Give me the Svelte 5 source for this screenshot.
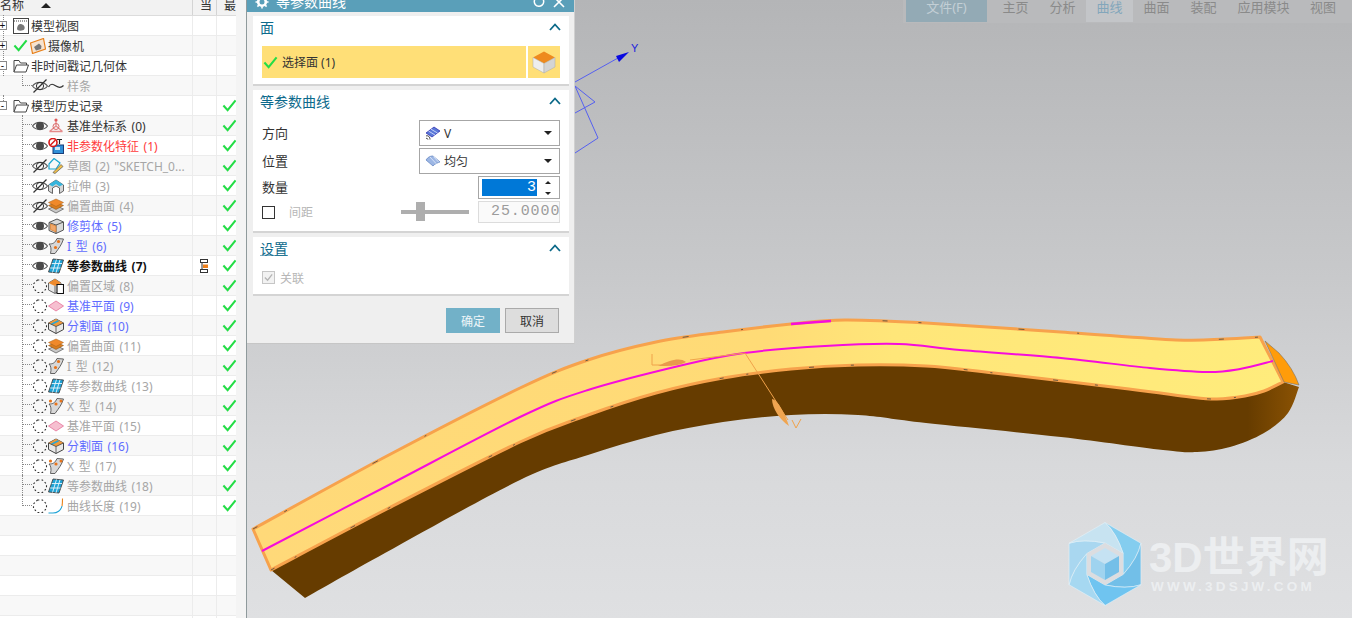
<script lang="ts">
  type Row = { label?: string; tone?: string; lvl?: number; vis?: string; icon?: string; check?: boolean; toggle?: string; stem?: string; cur?: boolean; camera?: boolean };

  const rows: Row[] = [
    { label: '模型视图', lvl: 0, icon: 'view', toggle: '+', stem: 'root' },
    { label: '摄像机', lvl: 0, icon: 'camera', toggle: '+', camera: true, stem: 'root' },
    { label: '非时间戳记几何体', lvl: 0, icon: 'folder', toggle: '-', stem: 'root' },
    { label: '样条', lvl: 1, vis: 'off', icon: 'spline', tone: 'gray', stem: 'last' },
    { label: '模型历史记录', lvl: 0, icon: 'folder', toggle: '-', check: true, stem: 'rootlast' },
    { label: '基准坐标系 (0)', lvl: 1, vis: 'on', icon: 'csys', check: true, tone: 'dark', stem: 'mid' },
    { label: '非参数化特征 (1)', lvl: 1, vis: 'on', icon: 'nonparam', check: true, tone: 'red', stem: 'mid' },
    { label: '草图 (2) "SKETCH_0...', lvl: 1, vis: 'off', icon: 'sketch', check: true, tone: 'gray', stem: 'mid' },
    { label: '拉伸 (3)', lvl: 1, vis: 'off', icon: 'extrude', check: true, tone: 'gray', stem: 'mid' },
    { label: '偏置曲面 (4)', lvl: 1, vis: 'off', icon: 'offset', check: true, tone: 'gray', stem: 'mid' },
    { label: '修剪体 (5)', lvl: 1, vis: 'on', icon: 'trim', check: true, tone: 'blue', stem: 'mid' },
    { label: 'I 型 (6)', lvl: 1, vis: 'on', icon: 'itype', check: true, tone: 'blue', stem: 'mid' },
    { label: '等参数曲线 (7)', lvl: 1, vis: 'on', icon: 'iso', check: true, tone: 'bold', cur: true, stem: 'mid' },
    { label: '偏置区域 (8)', lvl: 1, vis: 'sup', icon: 'region', check: true, tone: 'gray', stem: 'mid' },
    { label: '基准平面 (9)', lvl: 1, vis: 'sup', icon: 'plane', check: true, tone: 'blue', stem: 'mid' },
    { label: '分割面 (10)', lvl: 1, vis: 'sup', icon: 'split', check: true, tone: 'blue', stem: 'mid' },
    { label: '偏置曲面 (11)', lvl: 1, vis: 'sup', icon: 'offset', check: true, tone: 'gray', stem: 'mid' },
    { label: 'I 型 (12)', lvl: 1, vis: 'sup', icon: 'itype', check: true, tone: 'gray', stem: 'mid' },
    { label: '等参数曲线 (13)', lvl: 1, vis: 'sup', icon: 'iso', check: true, tone: 'gray', stem: 'mid' },
    { label: 'X 型 (14)', lvl: 1, vis: 'sup', icon: 'xtype', check: true, tone: 'gray', stem: 'mid' },
    { label: '基准平面 (15)', lvl: 1, vis: 'sup', icon: 'plane', check: true, tone: 'gray', stem: 'mid' },
    { label: '分割面 (16)', lvl: 1, vis: 'sup', icon: 'split', check: true, tone: 'blue', stem: 'mid' },
    { label: 'X 型 (17)', lvl: 1, vis: 'sup', icon: 'xtype', check: true, tone: 'gray', stem: 'mid' },
    { label: '等参数曲线 (18)', lvl: 1, vis: 'sup', icon: 'iso', check: true, tone: 'gray', stem: 'mid' },
    { label: '曲线长度 (19)', lvl: 1, vis: 'sup', icon: 'length', check: true, tone: 'gray', stem: 'last' },
    {}, {}, {}, {}, {}, {}
  ];

  const tabs = [
    { name: '主页', w: 47 },
    { name: '分析', w: 47 },
    { name: '曲线', w: 47, active: true },
    { name: '曲面', w: 47 },
    { name: '装配', w: 47 },
    { name: '应用模块', w: 73 },
    { name: '视图', w: 46 }
  ];

  // catmull-rom through the measured points, good enough for the body outline
  function smooth(pts: number[][], start = true) {
    let d = start ? `M${pts[0][0]} ${pts[0][1]}` : `L${pts[0][0]} ${pts[0][1]}`;
    for (let i = 0; i < pts.length - 1; i++) {
      const p0 = pts[i - 1] ?? pts[i];
      const p1 = pts[i];
      const p2 = pts[i + 1];
      const p3 = pts[i + 2] ?? p2;
      const c1 = [p1[0] + (p2[0] - p0[0]) / 6, p1[1] + (p2[1] - p0[1]) / 6];
      const c2 = [p2[0] - (p3[0] - p1[0]) / 6, p2[1] - (p3[1] - p1[1]) / 6];
      d += `C${c1[0].toFixed(1)} ${c1[1].toFixed(1)} ${c2[0].toFixed(1)} ${c2[1].toFixed(1)} ${p2[0]} ${p2[1]}`;
    }
    return d;
  }

  const upper = [[253,529],[385,457],[520,388],[588,360],[656,342],[723,332],[791,324],[845,320],[926,323],[1061,332],[1176,340],[1225,339],[1260,337]];
  const lower = [[271,570],[385,510],[520,442],[588,415],[656,393],[723,378],[791,369],[858,365],[926,366],[994,373],[1129,389],[1190,397],[1217,399],[1245,396],[1264,391],[1283,382]];
  const under = [[305,598],[385,553],[520,480],[588,455],[656,435],[723,422],[791,415],[858,415],[926,423],[1061,437],[1163,450],[1197,452],[1230,447],[1264,433],[1288,413],[1299,387]];
  const iso = [[262,551],[385,487],[520,417],[588,390],[683,365],[744,353],[825,346],[899,344],[960,350],[1061,358],[1150,368],[1207,372],[1240,369],[1273,361]];

  const topFace = smooth(upper) + 'L1283 382' + smooth([...lower].reverse(), false) + 'Z';
  const sideFace = smooth(lower) + 'L1299 387' + smooth([...under].reverse(), false) + 'Z';
  const isoPath = smooth(iso);
  const upperPath = smooth(upper);
  const lowerPath = smooth(lower);

  // hexagon logo of the watermark: six blades swept from the rim to the inner ring
  const cx = 1105;
  const cy = 564;
  const hex = (r: number) =>
    Array.from({ length: 6 }, (_, i) => {
      const a = ((i * 60 - 90) * Math.PI) / 180;
      return [cx + r * Math.cos(a), cy + r * Math.sin(a)];
    });
  const outer = hex(41.5);
  const inner = hex(21);
  const bladeColors = ['#84cdef', '#72bfe8', '#6fc4f0', '#a6d8f1', '#a9d7f0', '#c7e3f1'];
  const sweep = (a: number[], b: number[]) => {
    const mx = (a[0] + b[0]) / 2;
    const my = (a[1] + b[1]) / 2;
    return `${(cx + (mx - cx) * 1.22).toFixed(1)} ${(cy + (my - cy) * 1.22).toFixed(1)}`;
  };
  const blades = outer.map((p, i) => {
    const a = outer[(i + 1) % 6];
    const b = inner[(i + 2) % 6];
    const c = inner[(i + 1) % 6];
    return `M${p[0]} ${p[1]}L${a[0]} ${a[1]}Q${sweep(a, b)} ${b[0]} ${b[1]}L${c[0]} ${c[1]}Q${sweep(p, c)} ${p[0]} ${p[1]}Z`;
  });
</script>

{#snippet eye(kind)}
  <svg class="vis" viewBox="0 0 16 16" width="16" height="16">
    {#if kind === 'sup'}
      <path d="M5.5 2 H10.5 L14.5 6 V10.5 L10.5 14.5 H5.5 L1.5 10.5 V6 Z" fill="none" stroke="#333" stroke-width="1.1" stroke-dasharray="1.8 2.2"/>
    {:else}
      <path d="M0.5 8 C4 3.2 12 3.2 15.5 8 C12 12.8 4 12.8 0.5 8 Z" fill="none" stroke="#555" stroke-width="1.1"/>
      {#if kind === 'on'}
        <circle cx="8" cy="8" r="4" fill="#4a4a4a"/>
      {:else}
        <circle cx="8" cy="8" r="3.6" fill="none" stroke="#333" stroke-width="1"/>
        <path d="M1.5 14.5 L14.5 1.5" stroke="#333" stroke-width="1.2"/>
      {/if}
    {/if}
  </svg>
{/snippet}

{#snippet feature(kind)}
  <svg class="ico" viewBox="0 0 16 16" width="16" height="16">
    {#if kind === 'view'}
      <rect x="0.5" y="0.5" width="15" height="15" fill="#fff" stroke="#444"/>
      <path d="M1 3 H15" stroke="#444" stroke-dasharray="1 1"/>
      <path d="M4 11 C4 7 7 5 9 6.5 C12 7 12.5 11 10.5 12 C8 13 4.5 13 4 11 Z" fill="#777"/>
    {:else if kind === 'camera'}
      <path d="M0.5 5 L13.5 0.5 L15.5 11 L2.5 15.5 Z" fill="#f6e3cf" stroke="#e8801a" stroke-width="1.2"/>
      <path d="M4 9 L9 5.5 L11.5 8 L11 11 L6 12.5 Z" fill="#777"/>
    {:else if kind === 'folder'}
      <path d="M1 14 V2.5 H6 L7.5 5 H13.5 V7" fill="none" stroke="#444"/>
      <path d="M1 14 L3.5 7 H15.5 L13 14 Z" fill="#fff" stroke="#444"/>
    {:else if kind === 'spline'}
      <path d="M0.5 9 C3 5 5 6 8 8 C11 10 13 10 15.5 7.5" fill="none" stroke="#333" stroke-width="1.2"/>
    {:else if kind === 'csys'}
      <path d="M8 2 V8 L1.5 13.5 M8 8 L14.5 13.5 M1.5 13.5 H14.5" fill="none" stroke="#e58a8a" stroke-width="1.3"/>
      <circle cx="8" cy="8.5" r="3" fill="none" stroke="#d96a6a"/>
      <circle cx="8" cy="2" r="1.6" fill="#e05a5a"/>
    {:else if kind === 'nonparam'}
      <rect x="5" y="7" width="10.5" height="8.5" fill="#2f8fd8" stroke="#1a3f7a"/>
      <rect x="7" y="9" width="5" height="3" fill="#cde6f7"/>
      <circle cx="5" cy="4.5" r="4" fill="#fff" stroke="#d81818" stroke-width="1.6"/>
      <path d="M2.5 7 L7.5 2" stroke="#d81818" stroke-width="1.4"/>
      <path d="M9 1.5 H14 M11.5 1.5 V6" stroke="#222" stroke-width="1.2"/>
    {:else if kind === 'sketch'}
      <path d="M1 6 L6 0.5 L12 5 L8 11 H1 Z" fill="none" stroke="#1aa6cf" stroke-width="1.2"/>
      <path d="M5 14.5 L13 6.5 L15 8.5 L7 15.5 Z" fill="#f2c14a" stroke="#555" stroke-width="0.7"/>
    {:else if kind === 'extrude'}
      <path d="M0.5 7 L8 2 L15.5 7 V13 L11.5 15.5 V10 L8 8 L4.5 10 V15.5 L0.5 13 Z" fill="#d6d6d6" stroke="#444" stroke-width="0.8"/>
      <path d="M1 6.5 L8 2 L15 6.5 L11.5 8.5 L8 6 L4.5 8.5 Z" fill="#35b5dd"/>
    {:else if kind === 'offset'}
      <path d="M0.5 11 L8 7.5 L15.5 11 L8 15 Z" fill="#c9c9c9" stroke="#555" stroke-width="0.7"/>
      <path d="M0.5 7.5 L8 4 L15.5 7.5 L8 11.5 Z" fill="#d97d1e" stroke="#8a4d10" stroke-width="0.5"/>
      <path d="M0.5 4.5 L8 1 L15.5 4.5 L8 8.5 Z" fill="#f0892a" stroke="#a85f14" stroke-width="0.5"/>
    {:else if kind === 'trim'}
      <path d="M1 4.5 L9 1 L15.5 4 V12 L8 15.5 L1 12.5 Z" fill="#d8d8d8" stroke="#555"/>
      <path d="M1 4.5 L8 7 L15.5 4 M8 7 V15.5" fill="none" stroke="#555"/>
      <path d="M2.5 6 L8 8 V14 L2.5 11.5 Z" fill="#f0a76a" stroke="#d97a24" stroke-width="0.7"/>
    {:else if kind === 'itype' || kind === 'xtype'}
      <path d="M1 6 C5 6 7 5 9 0.5 L15.5 1 C13.5 7 11 10 7 15.5 L2.5 15.5 C3.5 11 3 8 1 6 Z" fill="#d8d8d8" stroke="#555" stroke-width="0.9"/>
      {#if kind === 'itype'}
        <circle cx="10.5" cy="3.5" r="1.6" fill="#e8741a"/>
        <circle cx="7.5" cy="9.5" r="1.6" fill="#e8741a"/>
      {:else}
        <circle cx="2.5" cy="3" r="1.6" fill="#e8741a"/>
        <circle cx="8" cy="6" r="1.6" fill="#e8741a"/>
        <circle cx="13" cy="3" r="1.5" fill="#e8741a"/>
      {/if}
    {:else if kind === 'iso'}
      <path d="M5 1 L15.5 2 L11 15 L0.5 14 Z" fill="#1fa3d6" stroke="#444" stroke-width="0.9"/>
      <path d="M8.5 1.5 L4.5 14.5 M12 1.8 L8 14.8 M3.7 5.5 H14 M2.2 10 H12.5" stroke="#e8f5fb" stroke-width="0.9"/>
    {:else if kind === 'region'}
      <path d="M0.5 5 L7 1 L13 5 V12 L7 15.5 L0.5 12 Z" fill="#e6e6e6" stroke="#444" stroke-width="0.8"/>
      <path d="M0.5 5 L7 1 L13 5 L7 8 Z" fill="#ee8a2c"/>
      <path d="M9 6.5 H15.5 V15.5 H9 Z" fill="#fff" stroke="#111" stroke-width="1.1"/>
      <path d="M7 8 V15" stroke="#444" stroke-width="0.8"/>
    {:else if kind === 'plane'}
      <path d="M0.5 8 L8 3 L15.5 8 L8 13 Z" fill="#f6bfd0" stroke="#e87ea0" stroke-width="0.9"/>
    {:else if kind === 'split'}
      <path d="M0.5 5 L8 1 L15.5 5 V11.5 L8 15.5 L0.5 11.5 Z" fill="#e8e8e8" stroke="#444"/>
      <path d="M0.5 5 L8 1 L15.5 5 L8 8.5 Z" fill="#f09a3a"/>
      <path d="M3.5 6.2 L10.5 2.8" stroke="#2aa6d6" stroke-width="1.6"/>
      <path d="M0.5 5 L8 8.5 L15.5 5 M8 8.5 V15.5" fill="none" stroke="#444" stroke-width="0.8"/>
    {:else if kind === 'length'}
      <path d="M0.5 15 H5 C9 15 13 12.5 14 8" fill="none" stroke="#1fa3d6" stroke-width="1.1"/>
      <path d="M14 8 C14.5 6 14.5 3 14.5 0.5" fill="none" stroke="#e8841e" stroke-width="1.1"/>
    {/if}
  </svg>
{/snippet}

{#snippet tick(size = 16)}
  <svg viewBox="0 0 16 16" width={size} height={size}>
    <path d="M1.5 8 L6 13 L14.5 2.5" fill="none" stroke="#23dd46" stroke-width="2.2"/>
  </svg>
{/snippet}

<div class="page">
  <aside class="nav">
    <div class="tree">
      <div class="head">
        <div class="c-name">
          <span class="title">名称</span>
          <span class="sort"></span>
        </div>
        <div class="c-cur"><span class="title">当</span></div>
        <div class="c-new"><span class="title">最</span></div>
      </div>
      {#each rows as r, i}
        <div class="row" class:alt={i % 2 === 1}>
          <div class="c-name" class:sub={r.lvl === 1}>
            {#if r.stem}<span class="stem {r.stem}"></span>{/if}
            {#if r.toggle}<span class="toggle">{r.toggle}</span>{/if}
            {#if r.camera}<span class="cam">{@render tick(15)}</span>{/if}
            {#if r.vis}{@render eye(r.vis)}{/if}
            {#if r.icon}{@render feature(r.icon)}{/if}
            {#if r.label}<span class="label {r.tone ?? ''}" class:top={r.lvl === 0}>{r.label}</span>{/if}
          </div>
          <div class="c-cur">
            {#if r.cur}
              <svg viewBox="0 0 8 14" width="8" height="14">
                <path d="M2 3 V12" stroke="#333"/>
                <rect x="0.5" y="0.5" width="7" height="3" fill="#fff" stroke="#333"/>
                <rect x="0.5" y="10.5" width="7" height="3" fill="#fff" stroke="#333"/>
                <rect x="3" y="5.5" width="5" height="3.5" fill="#ee7f1a"/>
              </svg>
            {/if}
          </div>
          <div class="c-new">
            {#if r.check}<span class="ok">{@render tick(15)}</span>{/if}
          </div>
        </div>
      {/each}
    </div>
  </aside>

  <main class="canvas">
    <svg class="scene" viewBox="247 0 1105 618" width="1105" height="618">
      <defs>
        <linearGradient id="face" gradientUnits="userSpaceOnUse" x1="252" x2="1285" y1="0" y2="0">
          <stop offset="0" stop-color="#ffd979"/>
          <stop offset="0.5" stop-color="#ffdb76"/>
          <stop offset="0.62" stop-color="#ffe679"/>
          <stop offset="1" stop-color="#ffec7c"/>
        </linearGradient>
        <linearGradient id="side" gradientUnits="userSpaceOnUse" x1="252" x2="1300" y1="0" y2="0">
          <stop offset="0" stop-color="#663c00"/>
          <stop offset="0.95" stop-color="#663c00"/>
          <stop offset="1" stop-color="#8c5303"/>
        </linearGradient>
      </defs>

      <!-- wcs triad -->
      <g fill="none" stroke="#5560f0" stroke-width="1">
        <path d="M575 82 L618 58"/>
        <path d="M575 86 L595 102 L575 113"/>
        <path d="M575 86 L598 138 L575 153"/>
      </g>
      <path d="M629 52 L616 56 L619 62 Z" fill="#0808e0"/>
      <text x="631" y="52" class="axis">Y</text>

      <path d={sideFace} fill="url(#side)"/>
      <path d={topFace} fill="url(#face)" stroke="#f7a24c" stroke-width="3" stroke-linejoin="round"/>
      <path d="M1265 341 L1279 353 Q1293 368 1299 385 L1284 382 Z" fill="#ff9c0a" stroke="#666" stroke-width="0.5"/>
      <!-- z-fight specks along the edges -->
      <path d={upperPath} fill="none" stroke="#6a5a40" stroke-width="1" stroke-dasharray="5 31 3 97 6 53 2 140"/>
      <path d={lowerPath} fill="none" stroke="#6a5a40" stroke-width="1" stroke-dasharray="4 23 2 61 5 37 3 110"/>
      <path d={isoPath} fill="none" stroke="#f60cdc" stroke-width="2"/>
      <path d="M791 324 L831 321" stroke="#f60cdc" stroke-width="2.4"/>

      <!-- direction handles on the surface -->
      <g fill="none" stroke="#f0a24a" stroke-width="1">
        <path d="M745 353 L690 360 M652 354 V365 H672"/>
        <path d="M745 353 L788 420"/>
        <path d="M792 420 L796 428 L801 419"/>
      </g>
      <path d="M658 366 C670 360 680 357 686 362 C680 366 668 366 658 366 Z" fill="#e89a4c"/>
      <path d="M772 399 C778 400 784 412 789 426 C780 420 772 408 772 399 Z" fill="#f0a550"/>

      <!-- watermark -->
      <g>
        {#each blades as b, i}
          <path d={b} fill={bladeColors[i]} stroke="#e4f2f9" stroke-width="0.6"/>
        {/each}
        <polygon points="1105,543 1123,553.5 1123,574.5 1105,585 1087,574.5 1087,553.5" fill="#dcdde0"/>
        <polygon points="1105,548 1119,556 1105,564 1091,556" fill="#c5e2f3"/>
        <polygon points="1091,556 1105,564 1105,580 1091,572" fill="#9fd3ef"/>
        <polygon points="1119,556 1105,564 1105,580 1119,572" fill="#74bfe8"/>
        <text x="1149" y="572" class="wm-big">3D世界网</text>
        <text x="1151" y="591" class="wm-small">WWW.3DSJW.COM</text>
      </g>
    </svg>

    <div class="ribbon">
      <div class="file">文件(F)</div>
      {#each tabs as t}
        <div class="tab" class:active={t.active} style="width:{t.w}px">{t.name}</div>
      {/each}
    </div>

    <section class="dialog">
      <header class="bar">
        <div class="bar-in">
          <svg viewBox="0 0 14 14" width="14" height="14">
            <circle cx="7" cy="7" r="3.8" fill="none" stroke="#fff" stroke-width="2.6"/>
            <path d="M7 0.5 V13.5 M0.5 7 H13.5 M2.4 2.4 L11.6 11.6 M11.6 2.4 L2.4 11.6" stroke="#fff" stroke-width="1.6" stroke-dasharray="2 9"/>
          </svg>
          <span class="bar-title">等参数曲线</span>
          <span class="grow"></span>
          <svg viewBox="0 0 12 12" width="12" height="12">
            <path d="M9.5 2.5 A4.7 4.7 0 1 1 3 2" fill="none" stroke="#fff" stroke-width="1.5"/>
          </svg>
          <svg class="close" viewBox="0 0 12 12" width="12" height="12">
            <path d="M1 1 L11 11 M11 1 L1 11" stroke="#fff" stroke-width="1.6"/>
          </svg>
        </div>
      </header>

      <div class="group g1">
        <div class="g-head">
          <span>面</span>
          <svg viewBox="0 0 12 8" width="12" height="8"><path d="M1 7 L6 1.5 L11 7" fill="none" stroke="#0a6888" stroke-width="1.8"/></svg>
        </div>
        <div class="picker">
          <div class="pick-main">
            {@render tick(15)}
            <span>选择面 (1)</span>
          </div>
          <div class="pick-btn">
            <svg viewBox="0 0 24 24" width="24" height="24">
              <path d="M12 1.5 L23 7.5 L12 13.5 L1 7.5 Z" fill="#ee8a1e"/>
              <path d="M1 7.5 L12 13.5 V23 L1 17 Z" fill="#eeeeee" stroke="#aaa" stroke-width="0.5"/>
              <path d="M23 7.5 L12 13.5 V23 L23 17 Z" fill="#d4d4d4" stroke="#aaa" stroke-width="0.5"/>
            </svg>
          </div>
        </div>
      </div>

      <div class="group g2">
        <div class="g-head">
          <span>等参数曲线</span>
          <svg viewBox="0 0 12 8" width="12" height="8"><path d="M1 7 L6 1.5 L11 7" fill="none" stroke="#0a6888" stroke-width="1.8"/></svg>
        </div>
        <div class="field">
          <label for="dir">方向</label>
          <div class="select" id="dir">
            <svg viewBox="0 0 16 14" width="16" height="14">
              <path d="M1 7 L9 1 L15 5 L7 11 Z" fill="#5a78d8" stroke="#2222aa" stroke-width="0.7"/>
              <path d="M3.5 5 L10 9 M6 3.2 L12.5 7" stroke="#dfe6ff" stroke-width="0.8"/>
              <path d="M1 10 C3 9 5 11 5 13.5 M1 12.5 C2 12 3 13 3 13.5" fill="none" stroke="#222" stroke-width="0.9"/>
            </svg>
            <span>V</span><i></i>
          </div>
        </div>
        <div class="field">
          <label for="pos">位置</label>
          <div class="select" id="pos">
            <svg viewBox="0 0 16 14" width="16" height="14">
              <path d="M1 6 C3 3 5 2 8 2 L15 8 C12 9 9.5 10 8 12 Z" fill="#9cb6e4" stroke="#6a8ac4" stroke-width="0.8"/>
              <path d="M5 3 L11.5 10 M8.5 2.5 L14 8.5" stroke="#e4ecfa" stroke-width="0.8"/>
            </svg>
            <span>均匀</span><i></i>
          </div>
        </div>
        <div class="field num">
          <label for="cnt">数量</label>
          <div class="spin" id="cnt">
            <span class="sel">3</span>
            <span class="arrows"><b></b><b></b></span>
          </div>
        </div>
        <div class="field pitch">
          <span class="box"></span>
          <span class="muted">间距</span>
          <span class="grow"></span>
          <span class="slider"><span class="thumb"></span></span>
          <span class="val">25.00000</span>
        </div>
      </div>

      <div class="group g3">
        <div class="g-head">
          <span class="u">设置</span>
          <svg viewBox="0 0 12 8" width="12" height="8"><path d="M1 7 L6 1.5 L11 7" fill="none" stroke="#0a6888" stroke-width="1.8"/></svg>
        </div>
        <div class="assoc">
          <span class="box on">
            <svg viewBox="0 0 12 12" width="11" height="11"><path d="M2 6 L5 9 L10 2.5" fill="none" stroke="#b4b4b4" stroke-width="1.4"/></svg>
          </span>
          <span class="muted">关联</span>
        </div>
      </div>

      <footer class="actions">
        <button class="ok-btn">确定</button>
        <button class="no-btn">取消</button>
      </footer>
    </section>
  </main>
</div>

<style>
  :global(body) {
    margin: 0;
    overflow: hidden;
  }

  .page {
    display: flex;
    width: 1352px;
    height: 618px;
    overflow: hidden;
    font-family: "Noto Sans", "Noto Sans CJK SC", sans-serif;
    font-size: 12px;
    color: #333;
  }

  /* navigator */
  .nav {
    width: 247px;
    flex: none;
    box-sizing: border-box;
    background: #f4f4f4;
    border-right: 1px solid #8f9a9c;
    overflow: hidden;
  }

  .tree {
    width: 236px;
    background: #fff;
  }

  .head,
  .row {
    display: grid;
    grid-template-columns: 193px 24px 19px;
  }

  .head {
    height: 16px;
    background: #f2f2f2;
    border-bottom: 1px solid #dcdcdc;
    box-sizing: border-box;
    overflow: hidden;
  }

  .head > div {
    display: flex;
    align-items: flex-start;
    overflow: hidden;
    border-right: 1px solid #d4d4d4;
    box-sizing: border-box;
  }

  .head .c-cur {
    padding-left: 7px;
  }

  .head .c-new {
    padding-left: 7px;
    border-right: 0;
  }

  .title {
    font-size: 12px;
    line-height: 12px;
    white-space: nowrap;
  }

  .sort {
    width: 0;
    height: 0;
    margin: 3px 0 0 17px;
    border: 5px solid transparent;
    border-top: 0;
    border-bottom: 5px solid #222;
  }

  .row {
    height: 20px;
    box-sizing: border-box;
    border-bottom: 1px solid #ececec;
    background: #fff;
  }

  .row.alt {
    background: #f8f8f8;
  }

  .row > div {
    position: relative;
    display: flex;
    align-items: center;
    height: 19px;
    border-right: 1px solid #ececec;
    box-sizing: border-box;
  }

  .row .c-new {
    border-right: 0;
    overflow: hidden;
  }

  .row .c-name {
    padding-left: 13px;
  }

  .row .c-name.sub {
    padding-left: 32px;
  }

  .row .c-cur {
    justify-content: center;
    padding-right: 1px;
  }

  .ok {
    display: flex;
    margin-left: 5px;
  }

  .cam {
    display: flex;
    margin-right: 2px;
  }

  .toggle {
    position: absolute;
    left: -2px;
    top: 5px;
    width: 7px;
    height: 7px;
    border: 1px solid #888;
    background: #fff;
    font: 10px/7px "Liberation Sans", sans-serif;
    text-align: center;
    color: #111;
    z-index: 1;
  }

  .stem {
    position: absolute;
    border-left: 1px dotted #888;
  }

  .stem.root {
    left: 3px;
    top: -1px;
    height: 21px;
  }

  .stem.rootlast {
    left: 3px;
    top: -1px;
    height: 10px;
  }

  .stem.mid,
  .stem.last {
    left: 22px;
    width: 9px;
    top: -1px;
    border-bottom: 1px dotted #888;
  }

  .stem.mid {
    height: 20px;
    border-bottom: 0;
    background: repeating-linear-gradient(90deg, #888 0 1px, transparent 1px 2px) 0 9px / 100% 1px no-repeat;
  }

  .stem.last {
    height: 10px;
  }

  .vis,
  .ico {
    flex: none;
  }

  .label {
    margin-left: 3px;
    white-space: nowrap;
    word-spacing: 1.5px;
    color: #333;
  }

  .label.top {
    margin-left: 2px;
  }

  .label.gray {
    color: #a6a6a6;
  }

  .label.blue {
    color: #5f6cff;
  }

  .label.red {
    color: #ff3c3c;
  }

  .label.bold {
    color: #111;
    font-weight: 700;
  }

  /* graphics area */
  .canvas {
    position: relative;
    flex: 1;
    min-width: 0;
    background: linear-gradient(180deg, #b4b5b7 0%, #c8c9cb 45%, #d8d9db 75%, #dfe0e2 100%);
    overflow: hidden;
  }

  .scene {
    position: absolute;
    left: 0;
    top: 0;
    display: block;
  }

  .axis {
    font: 11px "Liberation Sans", sans-serif;
    fill: #2222dd;
  }

  .wm-big {
    font: 700 42px "Liberation Sans", "Noto Sans CJK SC", sans-serif;
    fill: #eceef0;
  }

  .wm-small {
    font: 700 13.5px "Liberation Sans", sans-serif;
    letter-spacing: 3.2px;
    fill: #eceef0;
  }

  .ribbon {
    position: absolute;
    right: 0;
    top: 0;
    width: 449px;
    height: 23px;
    padding-left: 3px;
    box-sizing: border-box;
    display: flex;
    background: #b9babc;
    color: #8a8a8a;
    font-size: 13px;
  }

  .file {
    width: 81px;
    height: 22px;
    line-height: 15px;
    text-align: center;
    background: #93aab5;
    color: #c3cfd5;
    margin-right: 5px;
  }

  .tab {
    height: 22px;
    line-height: 15px;
    text-align: center;
    flex: none;
  }

  .tab.active {
    background: #c3c5c8;
    color: #82a6bb;
  }

  /* dialog */
  .dialog {
    position: absolute;
    left: 0;
    top: 0;
    width: 328px;
    height: 344px;
    box-sizing: border-box;
    background: #efefef;
    padding: 0 6px;
    display: flex;
    flex-direction: column;
    border-right: 1px solid #d0d0d0;
    border-bottom: 1px solid #c6c6c6;
  }

  .bar {
    height: 12px;
    margin: 0 -6px 4px;
    background: #5a9fb9;
    overflow: hidden;
    flex: none;
  }

  .bar-in {
    display: flex;
    align-items: center;
    gap: 7px;
    height: 14px;
    margin-top: -5px;
    padding: 0 9px 0 8px;
    color: #fff;
    font-size: 14px;
    line-height: 14px;
  }

  .grow {
    flex: 1;
  }

  .close {
    margin-left: 1px;
  }

  .group {
    background: #fff;
    border-bottom: 2px solid #d4d4d4;
    box-sizing: border-box;
    padding: 0 9px;
    margin-bottom: 4px;
    flex: none;
    width: 316px;
  }

  .g1 {
    height: 70px;
  }

  .g2 {
    height: 143px;
  }

  .g3 {
    height: 59px;
  }

  .g-head {
    display: flex;
    justify-content: space-between;
    align-items: center;
    height: 26px;
    box-sizing: border-box;
    padding-bottom: 4px;
    margin: 0 -1px 4px -2px;
    color: #0d6a8c;
    font-size: 14px;
  }

  .g3 .g-head {
    margin-bottom: 0;
  }

  .g-head .u {
    text-decoration: underline;
    text-decoration-color: #7fb0c4;
    text-underline-offset: 1px;
  }

  .picker {
    display: flex;
    gap: 2px;
    height: 32px;
  }

  .pick-main {
    flex: 1;
    display: flex;
    align-items: center;
    gap: 4px;
    background: #ffdf77;
    padding-left: 1px;
    color: #333;
  }

  .pick-btn {
    width: 32px;
    display: flex;
    align-items: center;
    justify-content: center;
    background: #ffdf77;
  }

  .field {
    display: flex;
    align-items: center;
    justify-content: space-between;
    height: 26px;
    margin-bottom: 2px;
    color: #333;
  }

  .field label {
    font-size: 13px;
    line-height: 13px;
  }

  .select {
    width: 141px;
    height: 26px;
    box-sizing: border-box;
    border: 1px solid #a6a6a6;
    display: flex;
    align-items: center;
    gap: 3px;
    padding: 0 7px 0 5px;
    background: #fff;
  }

  .select span {
    flex: 1;
  }

  .select i {
    width: 0;
    height: 0;
    border: 4px solid transparent;
    border-bottom: 0;
    border-top: 4px solid #222;
  }

  .field.num {
    height: 23px;
    margin-bottom: 2px;
  }

  .spin {
    width: 82px;
    height: 23px;
    box-sizing: border-box;
    border: 1px solid #a6a6a6;
    padding: 2px 0 2px 3px;
    display: flex;
    align-items: stretch;
  }

  .sel {
    width: 55px;
    background: #0078d7;
    color: #fff;
    text-align: right;
    padding-right: 1px;
    box-sizing: border-box;
    font: 15px/17px "Liberation Mono", monospace;
  }

  .arrows {
    flex: 1;
    display: flex;
    flex-direction: column;
    align-items: center;
    justify-content: space-between;
    padding: 2px 0 1px;
  }

  .arrows b {
    width: 0;
    height: 0;
    border: 3px solid transparent;
    border-top: 0;
    border-bottom: 3px solid #222;
  }

  .arrows b + b {
    border-bottom: 0;
    border-top: 3px solid #222;
  }

  .field.pitch {
    justify-content: flex-start;
    height: 22px;
    margin: 0;
  }

  .box {
    width: 13px;
    height: 13px;
    flex: none;
    box-sizing: border-box;
    border: 1px solid #333;
    display: flex;
    align-items: center;
    justify-content: center;
  }

  .box.on {
    border-color: #c6c6c6;
    background: #f2f2f2;
  }

  .muted {
    color: #b6b6b6;
  }

  .pitch .muted {
    margin-left: 14px;
  }

  .slider {
    position: relative;
    width: 68px;
    height: 4px;
    background: #aeaeae;
    margin-right: 9px;
    flex: none;
  }

  .thumb {
    position: absolute;
    left: 15px;
    top: -8px;
    width: 9px;
    height: 19px;
    background: #aeaeae;
  }

  .val {
    width: 82px;
    height: 22px;
    box-sizing: border-box;
    border: 1px solid #dcdcdc;
    background: #fafafa;
    padding-left: 12px;
    overflow: hidden;
    color: #9c9c9c;
    font: 15px/20px "Liberation Mono", monospace;
    letter-spacing: 0.9px;
    flex: none;
    white-space: nowrap;
  }

  .assoc {
    display: flex;
    align-items: center;
    gap: 5px;
    margin-top: 8px;
    height: 13px;
  }

  .actions {
    display: flex;
    justify-content: flex-end;
    gap: 5px;
    margin-top: 8px;
    padding-right: 10px;
    width: 316px;
    box-sizing: border-box;
  }

  .actions button {
    width: 54px;
    height: 25px;
    font: inherit;
    padding: 0;
    box-sizing: border-box;
  }

  .ok-btn {
    background: #72b1c8;
    color: #eef6f9;
    border: 0;
  }

  .no-btn {
    background: #dddddd;
    color: #333;
    border: 1px solid #aaa;
  }
</style>
